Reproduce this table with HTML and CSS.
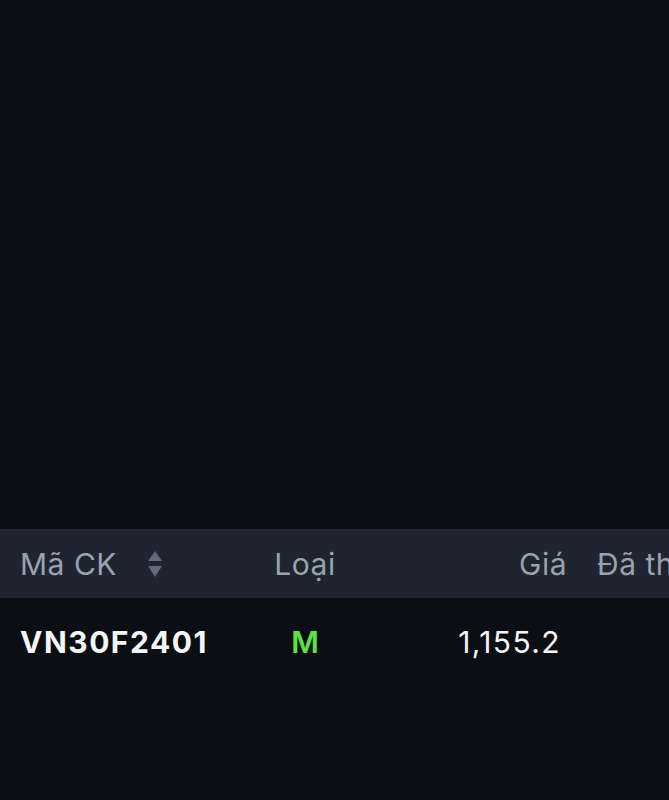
FILE: index.html
```html
<!DOCTYPE html>
<html lang="vi">
<head>
<meta charset="utf-8">
<link rel="stylesheet" href="styles.css">
</head>
<body>
<div class="page">
  <div class="top-space"></div>
  <div class="table">
    <div class="thead">
      <div class="cell c-code">Mã CK
        <svg class="sort" width="14" height="30" viewBox="0 0 14 30">
          <path d="M7 2 L14 12 H0 Z" fill="#5f6a7a"/>
          <path d="M0 17 H14 L7 28 Z" fill="#5f6a7a"/>
        </svg>
      </div>
      <div class="cell c-type">Loại</div>
      <div class="cell c-price">Giá</div>
      <div class="cell c-filled">Đã thực hiện</div>
    </div>
    <div class="trow">
      <div class="cell c-code sym">VN30F2401</div>
      <div class="cell c-type buy">M</div>
      <div class="cell c-price num">1,155.2</div>
      <div class="cell c-filled"></div>
    </div>
  </div>
</div>
</body>
</html>
```

FILE: styles.css
```css
html, body {
  margin: 0;
  padding: 0;
  background: #0b0e13;
  overflow: hidden;
}
.page {
  width: 669px;
  height: 800px;
  overflow: hidden;
  font-family: Inter, "Noto Sans", sans-serif;
}
.top-space {
  height: 529px;
}
.table {
  width: 669px;
  overflow: hidden;
}
.thead, .trow {
  display: grid;
  align-items: center;
  white-space: nowrap;
}
.thead {
  grid-template-columns: 240px 130px 197px 300px;
  height: 69px;
  background: #1e2530;
  color: #9aa2af;
  font-size: 30px;
  letter-spacing: 0.5px;
}
.trow {
  grid-template-columns: 240px 130px 191px 300px;
  height: 88px;
  color: #f4f5f7;
  font-size: 30px;
}
.c-code {
  padding-left: 20px;
  display: flex;
  align-items: center;
}
.sort {
  margin-left: 31px;
}
.c-type {
  text-align: center;
}
.c-price {
  text-align: right;
}
.trow .c-price {
  padding-right: 0;
}
.thead .c-filled {
  padding-left: 30px;
}
.sym {
  font-weight: 700;
  letter-spacing: 1.5px;
}
.buy {
  color: #5fe04b;
  font-weight: 600;
}
.num {
  font-weight: 400;
  letter-spacing: 1.4px;
}
```
